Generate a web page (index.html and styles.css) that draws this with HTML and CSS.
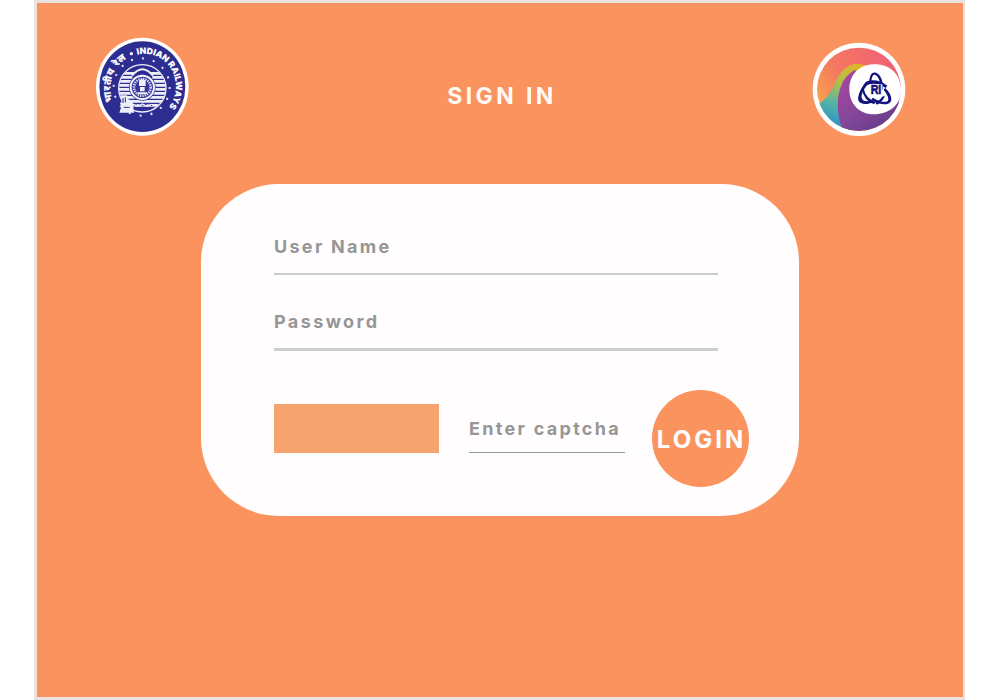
FILE: index.html
```html
<!DOCTYPE html>
<html lang="en">
<head>
<meta charset="utf-8">
<title>Sign in</title>
<link rel="stylesheet" href="styles.css">
</head>
<body>
<main class="screen">
  <header class="header">
    <svg class="logo logo-railways" viewBox="0 0 318 330" role="img" aria-label="Indian Railways">
      <defs>
        <path id="arc-en" d="M142 68 A94 98 0 0 1 214 246"/>
        <path id="arc-hi" d="M68 208 A94 102 0 0 1 126 72"/>
        <clipPath id="disc"><circle cx="157" cy="169" r="70"/></clipPath>
      </defs>
      <ellipse cx="157" cy="164" rx="139" ry="147" fill="#fff"/>
      <ellipse cx="157" cy="164" rx="129" ry="136" fill="#2d2d91"/>
      <ellipse cx="155" cy="165" rx="84" ry="86" fill="none" stroke="#e6e6f6" stroke-width="6" stroke-dasharray="6 27.4"/>
      <g clip-path="url(#disc)">
        <path d="M85 124H229M85 136H229M85 148H229M85 160H229M85 172H229M85 184H229M85 196H229M85 208H229M110 220H204" stroke="#eeeef8" stroke-width="8"/>
        <path d="M127 128q30-30 60 0v10h-60z" fill="#2d2d91"/>
        <path d="M126 131q31-39 63 0" fill="none" stroke="#eeeef8" stroke-width="6"/>
      </g>
      <circle cx="157" cy="169" r="71" fill="none" stroke="#eeeef8" stroke-width="4"/>
      <circle cx="157" cy="166" r="40" fill="#34349a"/>
      <circle cx="157" cy="166" r="35" fill="none" stroke="#f4f4fb" stroke-width="6"/>
      <circle cx="157" cy="166" r="25" fill="none" stroke="#dedef0" stroke-width="8" stroke-dasharray="4 3"/>
      <path d="M147 151q0-9 10-9t10 9v11h-20zM150 165h14v13h-14zM143 181h28v5h-28z" fill="#f0f0fa"/>
      <path d="M91 190h20l4 12 13 4 4 36H88l6-18-4-10 6-8z" fill="#eeeef8"/>
      <path d="M99 198v15M106 196v15M101 226h18M131 222l12-8 15 6 17-5 12 7" fill="none" stroke="#2d2d91" stroke-width="3"/>
      <path d="M130 217l14 6 13-7 14 7 13-6" fill="none" stroke="#eeeef8" stroke-width="4"/>
      <circle cx="124" cy="65" r="5" fill="#fff"/>
      <text class="seal-text"><textPath href="#arc-en" textLength="238">INDIAN RAILWAYS</textPath></text>
      <text class="seal-text seal-hindi"><textPath href="#arc-hi" textLength="145">भारतीय रेल</textPath></text>
    </svg>
    <h1 class="title">SIGN IN</h1>
    <svg class="logo logo-irctc" viewBox="0 0 318 318" role="img" aria-label="RI">
      <defs>
        <linearGradient id="warm" x1="0" y1=".5" x2="1" y2="0"><stop offset="0" stop-color="#f7a14c"/><stop offset=".3" stop-color="#f67662"/><stop offset="1" stop-color="#ee5b7b"/></linearGradient>
        <linearGradient id="cool" x1=".7" y1="0" x2=".4" y2="1"><stop offset="0" stop-color="#dcb72b"/><stop offset=".35" stop-color="#a8bd51"/><stop offset=".62" stop-color="#55b5a4"/><stop offset="1" stop-color="#2389d4"/></linearGradient>
        <linearGradient id="violet" x1="0" y1="0" x2=".8" y2="1"><stop offset="0" stop-color="#ac449f"/><stop offset=".5" stop-color="#86479a"/><stop offset="1" stop-color="#5a3a83"/></linearGradient>
        <clipPath id="ball"><ellipse cx="159" cy="160" rx="126" ry="125"/></clipPath>
      </defs>
      <ellipse cx="159" cy="160" rx="139" ry="140" fill="#fff"/>
      <g clip-path="url(#ball)">
        <path d="M20 20H300V300H20z" fill="url(#warm)"/>
        <path d="M34 208C66 186 78 164 90 136Q104 94 144 84Q164 84 178 88L134 285H20z" fill="url(#cool)"/>
        <path d="M118 292C92 258 90 188 104 154Q114 120 146 102L300 210V300z" fill="url(#violet)"/>
      </g>
      <path d="M201 85C250 83 283 112 285 160C287 205 251 235 202 235C159 235 130 203 130 160C130 118 158 87 201 85z" fill="#fff"/>
      <g fill="#12127d">
        <path d="M190 136C191 116 199 106 210 110C226 117 233 139 230 162L223 160C224 139 219 122 208 117C201 114 198 122 196 136z"/>
        <path d="M180 137Q211 125 244 149L239 156Q211 136 184 147C170 163 163 181 169 190C174 198 187 196 199 191L202 198C182 208 162 206 157 193C154 180 165 154 180 137z"/>
        <path d="M237 155C251 168 260 186 254 197C244 210 219 206 196 191L200 185C219 197 240 201 246 194C250 188 243 173 233 162z"/>
        <path d="M168 160L173 157Q178 187 209 198L204 205Q173 193 168 160zM229 182L237 179Q229 199 213 206L208 200Q222 193 229 182z"/>
      </g>
      <path d="M190 145H229V179H190z" fill="#fff"/>
      <text class="mark" x="194" y="175" textLength="32" lengthAdjust="spacingAndGlyphs">RI</text>
    </svg>
  </header>
  <form class="card">
    <label class="field field-user">User Name</label>
    <label class="field field-password">Password</label>
    <div class="actions">
      <div class="captcha-image"></div>
      <label class="field field-captcha">Enter captcha</label>
      <button class="login" type="button">LOGIN</button>
    </div>
  </form>
</main>
</body>
</html>
```
FILE: styles.css
```css
* { box-sizing: border-box; }
body { margin: 0; background: #fff; font-family: Inter, "Liberation Sans", sans-serif; overflow: hidden; }
.screen {
  width: 931px; height: 700px; margin-left: 34px;
  border: 3px solid #ebe2df; border-right-width: 2px;
  background: #fb935e;
}
.header { display: flex; justify-content: space-between; height: 181px; padding: 29px 51px 0 53px; }
.logo { display: block; width: 106px; }
.logo-railways { height: 110px; }
.logo-irctc { height: 106px; margin-top: 4px; }
.seal-text { fill: #fff; font: 900 26px Inter, "Liberation Sans", sans-serif; }
.seal-hindi { font: 700 29px "Noto Sans Devanagari", "Noto Sans", sans-serif; stroke: #fff; stroke-width: 1px; }
.mark { fill: #12127d; font: 700 40px "Liberation Sans", sans-serif; stroke: #12127d; stroke-width: 2px; }
.title { margin: 50px 0 0 2px; font-size: 23px; line-height: 28px; font-weight: 700; letter-spacing: 3.4px; color: #fffaf5; }
.card {
  display: flex; flex-direction: column;
  width: 598px; height: 332px; margin-left: 164px; padding: 51px 50px 0 73px;
  border-radius: 78px; background: #fffdfe;
}
.field { display: block; color: #969696; font-size: 18px; line-height: 24px; font-weight: 700; letter-spacing: 2.3px; white-space: nowrap; }
.field-user { width: 444px; height: 40px; border-bottom: 2px solid #cdcccd; }
.field-password { width: 444px; height: 41px; margin-top: 35px; border-bottom: 3px solid #cfcecf; letter-spacing: 2.4px; }
.actions { display: flex; margin-top: 39px; }
.captcha-image { width: 165px; height: 49px; margin-top: 14px; background: #f6a46f; }
.field-captcha { width: 156px; height: 36px; margin: 27px 27px 0 30px; border-bottom: 1px solid #969696; }
.login {
  width: 97px; height: 97px; padding: 2px 0 0 2px; border: 0; border-radius: 50%;
  background: #fb935e; color: #fff; font: 700 24px Inter, "Liberation Sans", sans-serif; letter-spacing: 3px;
}
```
